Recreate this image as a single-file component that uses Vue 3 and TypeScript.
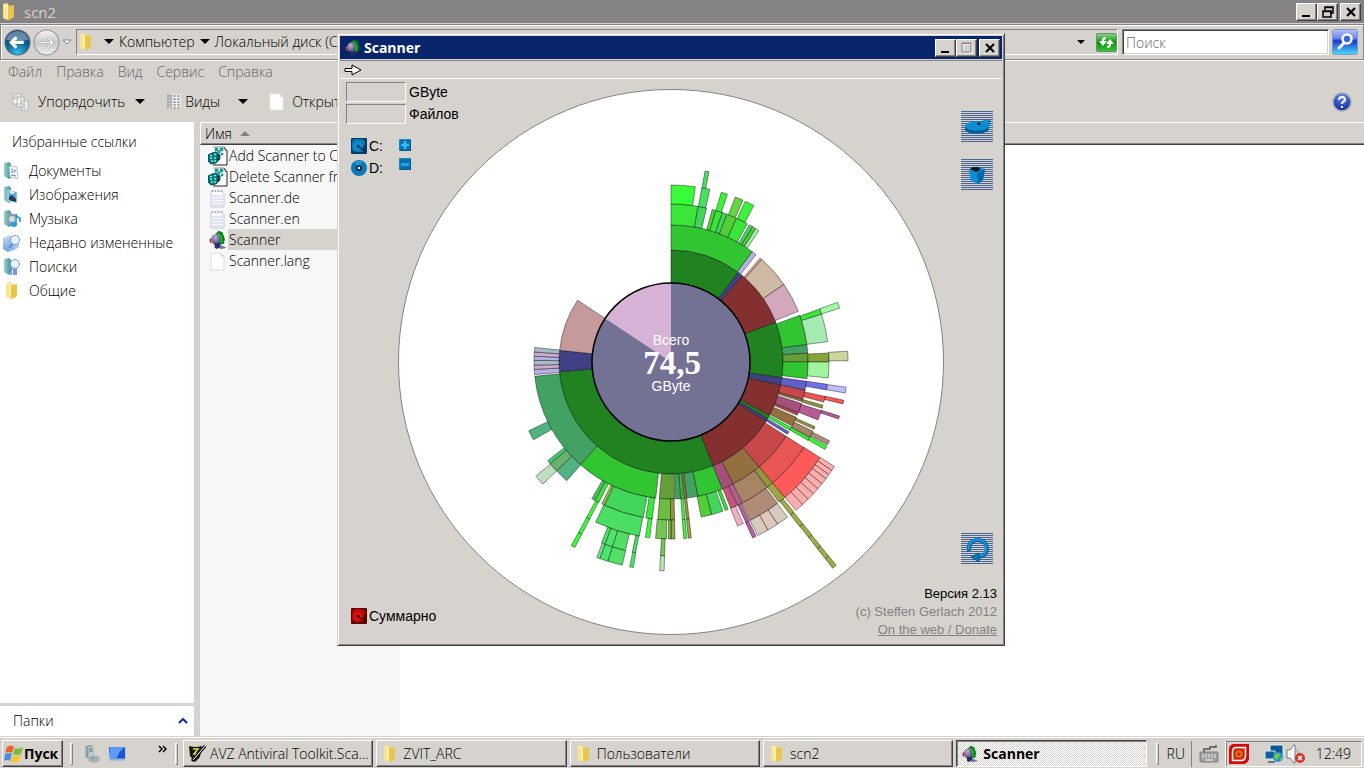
<script setup lang="ts">
import { computed, ref } from 'vue'

type Slice = [ring: number, from: number, to: number, color: string]

const radii = [79, 112, 137, 158, 177, 194, 209, 223, 237, 250, 262]

const slices: Slice[] = [
  [0, 0, 36.9, '#208220'], [0, 36.9, 39.5, '#404084'], [0, 39.5, 69.2, '#843031'],
  [0, 69.2, 98.1, '#208220'], [0, 98.1, 101.9, '#404084'], [0, 101.9, 118.6, '#843031'],
  [0, 118.6, 120.4, '#208220'], [0, 120.4, 121.9, '#404084'], [0, 121.9, 157.9, '#843031'],
  [0, 157.9, 265, '#208220'], [0, 265, 276, '#404084'], [0, 276, 303.5, '#c69a9a'],

  [1, 0, 36.4, '#31c631'], [1, 36.4, 38.4, '#b5b2e8'], [1, 40.6, 41.5, '#e8a2a2'],
  [1, 41.5, 55.5, '#ceb9a5'], [1, 55.5, 68.3, '#d4a8bc'], [1, 70.1, 82.7, '#31c631'],
  [1, 82.7, 86.3, '#42a263'], [1, 86.3, 89.9, '#639e38'], [1, 89.9, 97, '#31c631'],
  [1, 98.1, 101.9, '#6060c8'], [1, 101.9, 105.8, '#c64849'], [1, 105.8, 106.8, '#947040'],
  [1, 107.6, 111.8, '#a5507a'], [1, 111.9, 112.9, '#c64849'], [1, 113.8, 117.9, '#947040'],
  [1, 118.6, 119.9, '#30f430'], [1, 120.6, 121.8, '#6060c8'], [1, 122.8, 140, '#c64849'],
  [1, 140, 153, '#947040'], [1, 153, 158, '#a5507a'], [1, 158, 168.7, '#31c631'],
  [1, 168.7, 173.5, '#42a263'], [1, 173.5, 174.5, '#947a40'], [1, 174.7, 176, '#31c631'],
  [1, 176, 178, '#42a263'], [1, 178.4, 184.9, '#639e38'], [1, 186.4, 221.4, '#31c631'],
  [1, 221.4, 264, '#42a263'], [1, 264.7, 266.9, '#b5b2e8'], [1, 266.9, 268.7, '#ceaace'],
  [1, 268.7, 270.7, '#a8bcc8'], [1, 270.7, 272.4, '#b5b2e8'], [1, 272.4, 274.2, '#ceaace'],
  [1, 274.2, 276.1, '#a8bcc8'],

  [2, 0, 9.9, '#39e639'], [2, 9.9, 13, '#42d65a'], [2, 15.1, 16.5, '#52ce39'],
  [2, 16.5, 19, '#39e639'], [2, 19, 20.7, '#42d65a'], [2, 20.7, 24.5, '#52ce39'],
  [2, 24.5, 28.9, '#39e639'], [2, 29.7, 31.1, '#42d65a'], [2, 31.1, 32.3, '#52ce39'],
  [2, 32.5, 33.8, '#a0f4a0'], [2, 70.4, 72.4, '#39e639'], [2, 72.4, 82.6, '#a5ebb0'],
  [2, 86.7, 90, '#84a639'], [2, 90, 95.8, '#a0f4a0'], [2, 98.1, 100.2, '#7071e8'],
  [2, 102.6, 104.7, '#e85552'], [2, 105.9, 107, '#94963c'], [2, 108, 111.5, '#b85c94'],
  [2, 114.2, 115.2, '#94963c'], [2, 116, 118.4, '#a88464'], [2, 118.6, 119.8, '#30f430'],
  [2, 122.8, 140, '#e85552'], [2, 140, 142.5, '#94963c'], [2, 142.5, 153, '#a88464'],
  [2, 153.2, 155, '#b85c94'], [2, 155.2, 157.8, '#c65478'], [2, 158.8, 160, '#30e430'],
  [2, 160.8, 165.1, '#42d65a'], [2, 165.1, 169, '#52ce39'], [2, 173.4, 174.4, '#94963c'],
  [2, 174.9, 175.9, '#39fc39'], [2, 178.7, 180.2, '#94963c'], [2, 180.2, 184.8, '#6bbe42'],
  [2, 186.8, 189.2, '#39e639'], [2, 190.1, 204.8, '#42d65a'], [2, 205, 206, '#84c639'],
  [2, 207.2, 208.7, '#39e639'], [2, 208.9, 210.1, '#42c65a'], [2, 221.3, 226.5, '#52b284'],
  [2, 226.5, 229.9, '#6bb26b'], [2, 229.9, 231.3, '#42c66b'], [2, 240.5, 244.2, '#52b284'],

  [3, 0, 7.9, '#39fc39'], [3, 10, 12.7, '#4ade63'], [3, 16.5, 18.6, '#39f439'],
  [3, 21.3, 24, '#63d642'], [3, 24.8, 27.9, '#39f439'], [3, 70.3, 72.3, '#a0fca0'],
  [3, 86.5, 89.6, '#ced6a0'], [3, 98.2, 100.1, '#bdbeff'], [3, 102.5, 103.7, '#ff5558'],
  [3, 107.8, 108.8, '#b85c94'], [3, 116.4, 117.9, '#b08c78'], [3, 118.3, 119.6, '#30fc30'],
  [3, 122.7, 140, '#ff5a5a'], [3, 140, 142.4, '#a0a444'], [3, 143, 153.6, '#b08c78'],
  [3, 153.9, 155, '#b85ca4'], [3, 155.9, 157.9, '#efb0c4'], [3, 173.4, 174.4, '#94a642'],
  [3, 174.9, 175.9, '#39fc39'], [3, 178.7, 180, '#94a642'], [3, 180, 180.9, '#6bbe42'],
  [3, 181.5, 185, '#73c652'], [3, 186.9, 188.3, '#39fc39'], [3, 190.3, 205.2, '#4ade63'],
  [3, 207.4, 208.5, '#39fc39'], [3, 226.4, 229.8, '#bddfbd'],

  [4, 10.1, 11.3, '#4ade63'], [4, 122.6, 124, '#ffaead'], [4, 124, 125.5, '#ffaead'],
  [4, 125.5, 127, '#ffaead'], [4, 127, 128.9, '#ffaead'], [4, 128.9, 130.8, '#ffaead'],
  [4, 130.8, 132.8, '#ffaead'], [4, 132.8, 135, '#ffaead'], [4, 135, 137.3, '#ffaead'],
  [4, 137.3, 139.9, '#ffaead'], [4, 140.7, 142, '#9cae42'], [4, 143.1, 146.7, '#d6cabd'],
  [4, 146.7, 150, '#e0c6bd'], [4, 150, 153.5, '#d6cabd'], [4, 154, 155.1, '#b85ca4'],
  [4, 181.9, 183.1, '#73c652'], [4, 190.5, 191.5, '#4ade63'], [4, 193.6, 197.6, '#52df63'],
  [4, 197.6, 199.9, '#4ae66b'], [4, 199.9, 201, '#52df63'], [4, 207.4, 208.5, '#39fc39'],

  [5, 140.8, 142, '#9cae42'], [5, 181.9, 183.1, '#bde3b0'], [5, 190.4, 191.4, '#4ae66b'],
  [5, 193.5, 197.6, '#52df63'], [5, 197.6, 199.9, '#4ae66b'], [5, 199.9, 200.8, '#73df8c'],
  [5, 207.4, 208.5, '#39fc39'],
  [6, 140.8, 141.9, '#9cae42'], [7, 140.9, 141.9, '#9cae42'], [8, 140.9, 141.9, '#9cae42'],
  [9, 140.9, 141.9, '#9cae42'],
]

function point(r: number, deg: number): string {
  const a = (deg * Math.PI) / 180
  return `${(r * Math.sin(a)).toFixed(2)} ${(-r * Math.cos(a)).toFixed(2)}`
}

const paths = computed(() =>
  slices.map(([ring, from, to, color]) => {
    const inner = radii[ring]
    const outer = radii[ring + 1]
    const large = to - from > 180 ? 1 : 0
    return {
      color,
      d: `M${point(inner, from)}L${point(outer, from)}A${outer} ${outer} 0 ${large} 1 ${point(outer, to)}L${point(inner, to)}A${inner} ${inner} 0 ${large} 0 ${point(inner, from)}Z`,
    }
  }),
)

const freeWedge = `M0 0L${point(79, 303.5)}A79 79 0 0 1 ${point(79, 0)}Z`

const menus = ['Файл', 'Правка', 'Вид', 'Сервис', 'Справка']
const links = [
  { text: 'Документы', icon: 'i-docs' },
  { text: 'Изображения', icon: 'i-pics' },
  { text: 'Музыка', icon: 'i-music' },
  { text: 'Недавно измененные', icon: 'i-recent' },
  { text: 'Поиски', icon: 'i-search' },
  { text: 'Общие', icon: 'i-folder' },
]
const files = [
  { text: 'Add Scanner to Co', icon: 'i-reg' },
  { text: 'Delete Scanner fro', icon: 'i-reg' },
  { text: 'Scanner.de', icon: 'i-note' },
  { text: 'Scanner.en', icon: 'i-note' },
  { text: 'Scanner', icon: 'i-scan' },
  { text: 'Scanner.lang', icon: 'i-page' },
]
const tasks = [
  { text: 'AVZ Antiviral Toolkit.Sca...', icon: 'i-avz' },
  { text: 'ZVIT_ARC', icon: 'i-folder' },
  { text: 'Пользователи', icon: 'i-folder' },
  { text: 'scn2', icon: 'i-folder' },
  { text: 'Scanner', icon: 'i-scan' },
]
const selected = ref('Scanner')
const activeTask = ref('Scanner')
const query = ref('')
</script>

<template>
  <svg class="defs" aria-hidden="true">
    <defs>
      <linearGradient id="gFolder" x1="0" x2="1"><stop offset="0" stop-color="#fff3ad" /><stop offset="1" stop-color="#dfb52c" /></linearGradient>
      <linearGradient id="gTeal" x1="0" x2="1"><stop offset="0" stop-color="#9ad6c9" /><stop offset="1" stop-color="#3d8f91" /></linearGradient>
      <linearGradient id="gBlue" x1="0" x2="0" y1="0" y2="1"><stop offset="0" stop-color="#c6dcf8" /><stop offset="1" stop-color="#6d9fe0" /></linearGradient>
      <radialGradient id="gBack" cx=".5" cy=".95" r=".9"><stop offset="0" stop-color="#35c5ef" /><stop offset=".5" stop-color="#12699c" /><stop offset="1" stop-color="#0d3767" /></radialGradient>
      <linearGradient id="gFwd" x1="0" x2="0" y1="0" y2="1"><stop offset="0" stop-color="#f6f6f6" /><stop offset=".5" stop-color="#c9c9c9" /><stop offset="1" stop-color="#eee" /></linearGradient>
      <linearGradient id="gGreen" x1="0" x2="0" y1="0" y2="1"><stop offset="0" stop-color="#8cd68c" /><stop offset=".5" stop-color="#089608" /><stop offset="1" stop-color="#37c637" /></linearGradient>
      <linearGradient id="gFind" x1="0" x2="0" y1="0" y2="1"><stop offset="0" stop-color="#b8c4fa" /><stop offset=".35" stop-color="#6d84ee" /><stop offset=".45" stop-color="#1839cc" /><stop offset="1" stop-color="#4fdcff" /></linearGradient>
      <radialGradient id="gHead" cx=".45" cy=".3" r=".8"><stop offset="0" stop-color="#b9b2cc" /><stop offset=".5" stop-color="#7d739c" /><stop offset="1" stop-color="#3b3574" /></radialGradient>
      <radialGradient id="gHelp" cx=".5" cy=".2" r=".8"><stop offset="0" stop-color="#5d8cf0" /><stop offset="1" stop-color="#0d2a9c" /></radialGradient>
    </defs>
    <symbol id="i-folder" viewBox="0 0 18 18">
      <path d="M3 1l5-1v2l5 1v12l-5 2-5-2z" fill="url(#gFolder)" />
      <path d="M3 1l5 1v15l-5-2z" fill="#f8e48c" /><path d="M8 4l6-2v12l-5 3-1-1z" fill="#eac54a" /><path d="M4 2l3 1v12" fill="none" stroke="#fffbe0" />
    </symbol>
    <symbol id="i-docs" viewBox="0 0 18 18">
      <path d="M1 1l5-1 2 2v14l-2 1-5-3z" fill="url(#gTeal)" /><path d="M6 4l8 1 1 12-8-2z" fill="#f4f8fc" stroke="#9ab0c8" stroke-width=".7" />
      <path d="M8 7l2 1m1 0l2 1M8 10h4m-4 3l5 1" stroke="#5a7db8" />
    </symbol>
    <symbol id="i-pics" viewBox="0 0 18 18">
      <path d="M1 1l5-1 2 2v14l-2 1-5-3z" fill="url(#gTeal)" /><path d="M5 4l9 2v11l-9-2z" fill="#57a9df" stroke="#dce8f2" stroke-width=".8" />
      <path d="M6 11l3-2 4 4v3l-7-2z" fill="#263f59" /><path d="M7 6l4 1" stroke="#fff" stroke-width="2" />
    </symbol>
    <symbol id="i-music" viewBox="0 0 18 18">
      <path d="M1 1l5-1 2 2v14l-2 1-5-3z" fill="url(#gTeal)" /><path d="M5 3l7 1v11l-7-1z" fill="#8f9da2" /><circle cx="9" cy="9" r="3" fill="#d3dadc" />
      <path d="M13 14V4q0 3 4 4v4" fill="none" stroke="#148fdc" stroke-width="1.500" /><ellipse cx="11" cy="14.500" rx="3" ry="2.500" fill="#229be8" />
    </symbol>
    <symbol id="i-recent" viewBox="0 0 18 18">
      <path d="M0 4l6-3 5 2v12l-6 3-5-3z" fill="url(#gBlue)" /><path d="M5 6l11-4v11l-6 4-5-1z" fill="#94b9ee" opacity=".8" />
      <circle cx="12" cy="6" r="4.500" fill="#e6f3ff" stroke="#7d9cc4" /><path d="M9 10l-3 4" stroke="#6585b6" stroke-width="2" />
    </symbol>
    <symbol id="i-search" viewBox="0 0 18 18">
      <path d="M1 1l5-1 2 2v14l-2 1-5-3z" fill="url(#gTeal)" /><path d="M6 8h3v9l-3-1zm4 0h4v9h-4z" fill="#6d9ce4" />
      <circle cx="12" cy="6" r="4.500" fill="#e6f3ff" stroke="#7d9cc4" /><path d="M9 10l-3 4" stroke="#6585b6" stroke-width="2" />
    </symbol>
    <symbol id="i-reg" viewBox="0 0 20 20">
      <path d="M5 1h11l3 3v15H5z" fill="#fff" /><path d="M5 1h11l3 3" fill="none" stroke="#999" /><path d="M19 4v15H5" fill="none" stroke="#222" /><path d="M16 1l2 4" stroke="#333" />
      <path d="M0 9l4-2 4-1 4 3v4l-4 4-5 1-3-3z" fill="#087c7c" stroke="#042f2f" stroke-width=".8" />
      <path d="M2 9.500h2m2-1h2M2 12h2m2 0h2M3 15h2m1 0h2" stroke="#6df0f0" stroke-width="1.500" /><path d="M10 9v5" stroke="#042f2f" stroke-width="2" stroke-dasharray="2 1" />
      <path d="M7 2h3v3H7zM12 2h3v3h-3zM10 5h2v2h-2zM13 7h2v2h-2z" fill="#12b0b0" stroke="#087070" stroke-width=".5" />
    </symbol>
    <symbol id="i-note" viewBox="0 0 20 20">
      <path d="M3 3h11l2 2v14H3z" fill="#fbfbff" stroke="#c4c6d4" /><path d="M4 8h11M4 11h11M4 14h11M4 17h11" stroke="#c2caec" /><path d="M4 3h10" stroke="#aaa" stroke-dasharray="1 2" stroke-width="2" />
    </symbol>
    <symbol id="i-page" viewBox="0 0 20 20"><path d="M3 2h10l3 3v14H3z" fill="#fff" stroke="#dedede" /><path d="M13 2v3h3" fill="#eee" stroke="#ccc" /></symbol>
    <symbol id="i-scan" viewBox="0 0 18 18">
      <path d="M6 15l6-1 5 2-5 1z" fill="#1e1e5c" opacity=".6" />
      <path d="M7 3l3-2 3 1 1 3 1 3-1 4-4 2z" fill="#0c8c20" />
      <path d="M9 1.500l3 1 2 4 .5 4-2 3" stroke="#0a7d1b" stroke-width="1.500" stroke-dasharray="2 1" fill="none" /><path d="M9 3l3 3v5" stroke="#2fc23b" fill="none" />
      <ellipse cx="7" cy="8.500" rx="4" ry="5" fill="url(#gHead)" />
      <path d="M6 12h5v3l-3 2-2-1z" fill="#2b2a6b" /><path d="M1.500 8L3 7v5l-1.500-1z" fill="#b02d38" />
    </symbol>
    <symbol id="i-avz" viewBox="0 0 18 18">
      <path d="M1 1q6 2 13 0l-2 11-5 5-5-6z" fill="#15180a" /><path d="M5 4h5l-4 5h5" fill="none" stroke="#d9e829" stroke-width="1.500" /><path d="M17 1L4 16" stroke="#111" stroke-width="3" /><path d="M17 1L5 15" stroke="#fff" />
    </symbol>
    <symbol id="i-min" viewBox="0 0 16 14"><path d="M3 11h8" stroke="#000" stroke-width="2" /></symbol>
    <symbol id="i-close" viewBox="0 0 16 14"><path d="M4 3l8 8m0-8l-8 8" stroke="#000" stroke-width="2.200" /></symbol>
    <symbol id="i-down" viewBox="0 0 10 6"><path d="M0 0h10L5 5z" fill="currentColor" /></symbol>
  </svg>

  <div class="desktop">
    <main class="explorer">
      <header class="title">
        <svg class="ic18"><use href="#i-folder" /></svg>
        <span class="title-text">scn2</span>
        <div class="win-btns">
          <button class="wb" aria-label="Свернуть"><svg><use href="#i-min" /></svg></button>
          <button class="wb" aria-label="Восстановить"><svg viewBox="0 0 16 14"><path d="M5 5V2h8v6h-3M5 2.500h8" fill="none" stroke="#000" stroke-width="1.500" /><path d="M3 6h8v6H3zM3 6.500h8" fill="none" stroke="#000" stroke-width="1.500" /></svg></button>
          <button class="wb last" aria-label="Закрыть"><svg><use href="#i-close" /></svg></button>
        </div>
      </header>

      <nav class="nav">
        <div class="travel">
          <button class="round" aria-label="Назад"><svg viewBox="0 0 26 26"><circle cx="13" cy="13" r="12" fill="url(#gBack)" stroke="#4c6074" /><path d="M2 10a11.500 11.500 0 0 1 22 0q-11 4-22 0z" fill="#fff" opacity=".35" /><path d="M19 13H7m5-5l-5 5 5 5" fill="none" stroke="#fff" stroke-width="3" /></svg></button>
          <button class="round" aria-label="Вперед"><svg viewBox="0 0 26 26"><circle cx="13" cy="13" r="12" fill="url(#gFwd)" stroke="#949494" /><path d="M7 13h12m-5-5l5 5-5 5" fill="none" stroke="#aaa" stroke-width="3" /><path d="M7 13h12m-5-5l5 5-5 5" fill="none" stroke="#f2f2f2" stroke-width="1.500" /></svg></button>
          <button class="recent" aria-label="Последние страницы"><svg viewBox="0 0 10 6"><path d="M1 1h8L5 5z" fill="#fff" stroke="#7983a8" /></svg></button>
        </div>
        <div class="address">
          <svg class="ic18"><use href="#i-folder" /></svg>
          <svg class="tri first"><use href="#i-down" /></svg>
          <a href="#" class="crumb">Компьютер</a>
          <svg class="tri"><use href="#i-down" /></svg>
          <a href="#" class="crumb">Локальный диск (C:)</a>
          <button class="drop" aria-label="Список"><svg class="tri small"><use href="#i-down" /></svg></button>
          <button class="refresh" aria-label="Обновить"><svg viewBox="0 0 21 19"><rect x=".5" y=".5" width="20" height="18" rx="1" fill="url(#gGreen)" stroke="#6b8f6b" /><path d="M10 4q-4 0-4 3v1H3l4 5 4-5H8q0-2 2-2zM11 15q4 0 4-3v-1h3l-4-5-4 5h3q0 2-2 2z" fill="#fff" /></svg></button>
        </div>
        <input v-model="query" class="query" type="text" placeholder="Поиск" aria-label="Поиск" />
        <button class="find" aria-label="Найти"><svg viewBox="0 0 26 26"><rect x=".5" y=".5" width="25" height="25" rx="2" fill="url(#gFind)" stroke="#8795c4" /><circle cx="15" cy="10" r="4.500" fill="#3a67dc" stroke="#fff" stroke-width="2.500" /><path d="M12 14l-5 5" stroke="#fff" stroke-width="3" stroke-linecap="round" /></svg></button>
      </nav>

      <div class="menu"><button v-for="m in menus" :key="m">{{ m }}</button></div>

      <div class="tools">
        <button class="tool organize"><svg viewBox="0 0 18 18"><path d="M1 1h8v10H1zM5 4h7v10H5zM9 8h7v9H9z" fill="#f8f8f8" stroke="#aaa" stroke-width=".8" /><path d="M2 3h4v3H2zM11 10v6M13 10v6" stroke="#bbb" fill="#ddd" /></svg>Упорядочить<svg class="tri"><use href="#i-down" /></svg></button>
        <button class="tool views"><svg viewBox="0 0 18 18"><path d="M2 1h14v15H2z" fill="#eee" /><path d="M3 1v15M6 1v15" stroke="#777" /><path d="M8 3h3m1 0h3M8 6h3m1 0h3M8 9h3m1 0h3M8 12h3m1 0h3M8 15h3m1 0h3" stroke="#777" /><path d="M4 3h1m-1 3h1m-1 3h1m-1 3h1" stroke="#45a" /></svg>Виды<svg class="tri"><use href="#i-down" /></svg></button>
        <button class="tool open"><svg viewBox="0 0 18 18"><path d="M2 1h10l3 3v13H2z" fill="#fff" stroke="#e6e6e6" /><path d="M12 1v3h3" fill="#ddd" /></svg>Открыть</button>
        <button class="help" aria-label="Справка"><svg viewBox="0 0 20 20"><circle cx="10" cy="10" r="9" fill="url(#gHelp)" stroke="#aaa9b0" stroke-width="1.500" /><path d="M7 8q0-3 3-3t3 2.500q0 1.500-2 2.500-1 .6-1 2M10 14v2" fill="none" stroke="#fff" stroke-width="2" /></svg></button>
      </div>

      <div class="content">
        <aside class="side">
          <section class="fav">
            <h2>Избранные ссылки</h2>
            <a v-for="l in links" :key="l.text" href="#"><svg class="ic18"><use :href="'#' + l.icon" /></svg>{{ l.text }}</a>
          </section>
          <button class="folders">Папки<svg viewBox="0 0 10 6"><path d="M1 5l4-4 4 4" fill="none" stroke="#0a309c" stroke-width="2" /></svg></button>
        </aside>
        <section class="list">
          <button class="col">Имя<svg viewBox="0 0 10 5"><path d="M0 5l5-5 5 5z" fill="#848284" /></svg></button>
          <div class="files">
            <button v-for="f in files" :key="f.text" class="file" @click="selected = f.text">
              <svg class="ic20"><use :href="'#' + f.icon" /></svg>
              <span :class="{ sel: selected === f.text }">{{ f.text }}</span>
            </button>
          </div>
        </section>
      </div>
    </main>

    <section class="scanner" aria-label="Scanner">
      <header class="s-title">
        <svg class="ic18"><use href="#i-scan" /></svg>
        <span class="title-text">Scanner</span>
        <div class="win-btns">
          <button class="wb" aria-label="Свернуть"><svg><use href="#i-min" /></svg></button>
          <button class="wb" aria-label="Развернуть" disabled><svg viewBox="0 0 16 14"><path d="M4 3h9v9H4z" fill="none" stroke="#fff" /><path d="M3 2h9v9H3zM3 2.500h9" fill="none" stroke="#848284" /></svg></button>
          <button class="wb last" aria-label="Закрыть"><svg><use href="#i-close" /></svg></button>
        </div>
      </header>
      <div class="s-menu"><button aria-label="Вперед"><svg viewBox="0 0 19 12"><path d="M1 4.500h7V1l9 5-9 5V7.500H1z" fill="#fff" stroke="#000" /></svg></button></div>
      <div class="s-body">
        <svg class="chart" viewBox="-273 -273 546 546" role="img" aria-label="Всего 74,5 GByte">
          <circle r="272.500" fill="#fff" stroke="#848284" />
          <g class="arcs"><path v-for="(p, i) in paths" :key="i" :d="p.d" :fill="p.color" /></g>
          <circle r="79" fill="#737194" />
          <path :d="freeWedge" fill="#d6b2d6" />
          <circle r="79" fill="none" stroke="#000" stroke-width="1.500" />
          <text class="cap" y="-17">Всего</text>
          <text class="total" x="1" y="12">74,5</text>
          <text class="cap" y="29">GByte</text>
        </svg>
        <div class="left">
          <label class="stat"><input type="text" readonly />GByte</label>
          <label class="stat"><input type="text" readonly />Файлов</label>
          <div class="drives">
            <button class="drive"><svg viewBox="0 0 16 16"><rect width="16" height="16" rx="1" fill="#063c63" /><rect x="1" y="1" width="13" height="13" rx="4" fill="#0878b8" /><circle cx="7" cy="8" r="4.500" fill="#0a8fd6" /><circle cx="7" cy="8" r="1.500" fill="#053a5c" /><path d="M7 8l6 5V7" fill="none" stroke="#052c48" stroke-width="1.500" /></svg>C:</button>
            <button class="drive"><svg viewBox="0 0 16 16"><circle cx="8" cy="8" r="8" fill="#0878b8" /><path d="M8 8L3 2q5-3 9-1z" fill="#2596d4" /><circle cx="8" cy="8" r="2.800" fill="#05151f" /><circle cx="8" cy="8" r="1.300" fill="#fff" /></svg>D:</button>
          </div>
          <div class="zooms">
            <button aria-label="Увеличить"><svg viewBox="0 0 12 12"><rect width="12" height="12" fill="#0871ad" /><path d="M0 12V0h12" fill="none" stroke="#3199d0" /><path d="M12 1v11H1" fill="none" stroke="#06466f" /><path d="M6 2v8M2 6h8" stroke="#31bdff" stroke-width="2.500" /></svg></button>
            <button aria-label="Уменьшить"><svg viewBox="0 0 12 12"><rect width="12" height="12" fill="#0871ad" /><path d="M0 12V0h12" fill="none" stroke="#3199d0" /><path d="M12 1v11H1" fill="none" stroke="#06466f" /><path d="M2 6.500h8" stroke="#18a6ef" stroke-width="3" /></svg></button>
          </div>
          <button class="drive sum"><svg viewBox="0 0 16 16"><rect width="16" height="16" rx="1" fill="#5c0303" /><rect x="1" y="1" width="13" height="13" rx="4" fill="#b80808" /><circle cx="7" cy="8" r="4.500" fill="#de1010" /><circle cx="7" cy="8" r="1.500" fill="#4c0202" /><path d="M7 8l6 5V7" fill="none" stroke="#470202" stroke-width="1.500" /></svg>Суммарно</button>
        </div>
        <div class="right">
          <button class="act" aria-label="Диаграмма"><svg viewBox="0 0 32 31"><path d="M4 15v4q3 4 12 3.500 11 0 12-5V14z" fill="#055c93" /><ellipse cx="16" cy="15" rx="12" ry="4.500" fill="#0b8fd8" /><path d="M18 14l3-4 8-1v5l-3 2z" fill="#0b8fd8" stroke="#0870ac" stroke-width=".7" /><path d="M16 14l1-3 3 2-3 1z" fill="#04131e" /></svg></button>
          <button class="act" aria-label="Корзина"><svg viewBox="0 0 32 31"><path d="M8 11l3-3h7l6 2-2 11-5 4-7-3z" fill="#0b8fd8" /><path d="M16 14l1 11 5-4 2-11z" fill="#0567a3" /><path d="M9 10l3-2h6l1 3-4 2z" fill="#041520" /></svg></button>
          <button class="act reload" aria-label="Обновить"><svg viewBox="0 0 32 31"><path d="M8 18q-1-10 8-11 9 0 10 8 0 8-9 9" fill="none" stroke="#06578a" stroke-width="4" /><path d="M7.500 17q0-9 8-10.500 9 0 10 8 0 8-8 9" fill="none" stroke="#1193dc" stroke-width="2.500" /><path d="M10 24l8-4v9z" fill="#0b79b9" stroke="#06578a" /></svg></button>
          <span class="ver">Версия 2.13</span>
          <span class="copy">(c) Steffen Gerlach 2012</span>
          <a class="copy" href="#">On the web / Donate</a>
        </div>
      </div>
    </section>

    <footer class="taskbar">
      <button class="start"><svg viewBox="0 0 20 18"><path d="M3 2q4-3 7 0L8 8Q5 6 1 8z" fill="#ef6230" /><path d="M11 3q4 2 8-1l-2 7q-4 2-8 0z" fill="#7cba3c" /><path d="M1 9q4-2 7 0l-2 7q-3-2-6 0z" fill="#4e8ce0" /><path d="M9 10q4 2 8 0l-2 6q-4 3-8 1z" fill="#f8c52c" /></svg>Пуск</button>
      <i class="grip"></i>
      <div class="quick">
        <button aria-label="Диспетчер сервера"><svg viewBox="0 0 18 18"><path d="M3 1l5-1 3 1v11l-5 2-3-2z" fill="#8d9ca6" /><path d="M6 2l5-1v11l-5 2z" fill="#bec9cf" /><path d="M7 4h3M7 6h3" stroke="#566" /><path d="M6 12l6-2 5 2v4l-5 2-6-2z" fill="#a6b2b8" /><path d="M8 12h4v2H8z" fill="#78aa9a" /></svg></button>
        <button aria-label="Рабочий стол"><svg viewBox="0 0 20 16"><path d="M1 1h17v12H2z" fill="#1557d0" /><path d="M2 1h16Q12 4 9 13H2z" fill="#5c9cf2" /><path d="M1 14h17" stroke="#94b4e0" stroke-width="2" /></svg></button>
        <button class="more" aria-label="Ещё"><svg viewBox="0 0 9 8"><path d="M1 1l3 3-3 3m4-6l3 3-3 3" fill="none" stroke="#000" stroke-width="1.500" /></svg></button>
      </div>
      <i class="grip"></i>
      <div class="tasks">
        <button v-for="t in tasks" :key="t.text" class="task" :class="{ on: activeTask === t.text }" @click="activeTask = t.text"><svg class="ic18"><use :href="'#' + t.icon" /></svg><span>{{ t.text }}</span></button>
      </div>
      <i class="grip wide"></i>
      <button class="lang">RU</button>
      <button class="kbd" aria-label="Клавиатура"><svg viewBox="0 0 20 18"><path d="M5 7V4h6V2h6V0" fill="none" stroke="#555" stroke-width="1.500" /><rect x="1" y="7" width="18" height="10" rx="1" fill="#9c9c9c" stroke="#808080" /><path d="M3 10h14M3 12h14" stroke="#eee" stroke-dasharray="2 1" /><path d="M6 15h8" stroke="#fff" /></svg></button>
      <div class="tray">
        <svg class="t1" viewBox="0 0 20 20"><path d="M4 0h16v15q-1 4-5 5H0V5q0-4 4-5z" fill="#d60808" /><path d="M7 3.500h9.500V12q0 4.500-4.500 4.500H3.500V8q0-4.500 3.500-4.500z" fill="#e8300c" stroke="#fff" stroke-width="1.500" /><circle cx="10" cy="10" r="4.500" fill="#ef6518" stroke="#9c1808" /><circle cx="10" cy="10" r="1.500" fill="#9c3808" /></svg>
        <svg class="t2" viewBox="0 0 20 20"><path d="M6 1h13v11H6z" fill="#0b5a96" stroke="#e9eef2" /><path d="M1 7h10v8H1z" fill="#13609a" stroke="#dfe6ec" /><path d="M4 18h7" stroke="#6a7b88" stroke-width="2" /><circle cx="14" cy="13" r="5" fill="#268fe2" /><path d="M11 10l4-1 1 3-3 4-3-2zM16 14l3-1-2 4z" fill="#62cf3b" /></svg>
        <svg class="t3" viewBox="0 0 20 20"><path d="M1 6h3l4-5h1v18H8l-4-5H1z" fill="#fff" stroke="#6c7a86" /><path d="M11 5q3 4 0 10" fill="none" stroke="#999" /><circle cx="14" cy="14" r="5" fill="#d8342a" /><path d="M12 12l4 4m0-4l-4 4" stroke="#fff" stroke-width="1.500" /></svg>
        <time>12:49</time>
      </div>
    </footer>
  </div>
</template>

<style>
html,
body,
#app {
  height: 100%;
}
body {
  margin: 0;
  overflow: hidden;
}
</style>

<style scoped>
* {
  box-sizing: border-box;
}
.defs {
  position: absolute;
  width: 0;
  height: 0;
}
.desktop {
  position: relative;
  display: flex;
  flex-direction: column;
  height: 100vh;
  background: #d6d3ce;
  color: #000;
  font: 300 14px/20px "Open Sans", "Noto Sans", sans-serif;
  white-space: nowrap;
}
button {
  display: flex;
  align-items: center;
  padding: 0;
  border: 0;
  background: none;
  color: inherit;
  font: inherit;
  text-align: left;
}
a {
  color: inherit;
  text-decoration: none;
}
svg {
  flex: none;
}
.ic18 {
  width: 18px;
  height: 18px;
}
.ic20 {
  width: 20px;
  height: 20px;
}
.tri {
  width: 10px;
  height: 6px;
}
.explorer {
  flex: 1;
  min-height: 0;
  display: flex;
  flex-direction: column;
}
.title {
  display: flex;
  align-items: center;
  height: 23px;
  padding-right: 3px;
  background: #848284;
  color: #d6d3ce;
}
.title .title-text {
  margin-left: 6px;
  font-size: 15px;
  font-weight: 400;
}
.win-btns {
  display: flex;
  margin-left: auto;
}
.wb {
  justify-content: center;
  width: 21px;
  height: 18px;
  background: #d6d3ce;
  border: 1px solid;
  border-color: #fff #424142 #424142 #fff;
  box-shadow: inset -1px -1px #848284;
}
.wb svg {
  width: 16px;
  height: 14px;
}
.wb.last {
  margin-left: 2px;
}
.nav {
  display: flex;
  align-items: center;
  height: 36px;
  margin-top: 1px;
  padding: 0 5px 0 3px;
  border: 1px solid #848284;
  box-shadow: inset 1px 1px #fff, 0 1px #fff;
}
.travel {
  display: flex;
  align-items: center;
  width: 72px;
  gap: 2px;
}
.round svg {
  display: block;
  width: 27px;
  height: 27px;
}
.recent svg {
  width: 10px;
  height: 6px;
}
.address {
  flex: 1;
  display: flex;
  align-items: center;
  height: 26px;
  border: 1px solid;
  border-color: #848284 #fff #fff #848284;
}
.tri.first {
  margin-left: 9px;
}
.crumb {
  margin: 0 5px;
}
.drop {
  margin-left: auto;
}
.tri.small {
  width: 8px;
  height: 5px;
}
.refresh {
  margin-left: 11px;
}
.refresh svg {
  width: 21px;
  height: 19px;
}
.query {
  width: 207px;
  height: 26px;
  margin: 0 3px 0 4px;
  padding: 0 3px;
  border: 1px solid;
  border-color: #848284 #fff #fff #848284;
  border-radius: 0;
  box-shadow: inset 1px 1px #424142, inset -1px -1px #d6d3ce;
  background: #fff;
  font: inherit;
  outline: 0;
}
.query::placeholder {
  color: #666466;
  opacity: 1;
}
.find svg {
  width: 26px;
  height: 26px;
}
.menu {
  display: flex;
  gap: 14px;
  height: 24px;
  padding-left: 8px;
  color: #666466;
}
.tools {
  display: flex;
  align-items: center;
  height: 38px;
  padding: 0 12px 2px;
}
.tool {
  gap: 8px;
}
.tool svg:first-child {
  width: 18px;
  height: 18px;
}
.tool .tri {
  margin-left: 2px;
}
.views {
  gap: 2px;
  margin-left: 20px;
}
.views .tri {
  margin-left: 16px;
}
.open {
  gap: 6px;
  margin-left: 20px;
}
.help {
  margin-left: auto;
}
.help svg {
  width: 20px;
  height: 20px;
}
.content {
  flex: 1;
  min-height: 0;
  display: flex;
  gap: 6px;
}
.side {
  display: flex;
  flex-direction: column;
  gap: 3px;
  width: 194px;
}
.fav {
  flex: 1;
  padding-top: 10px;
  background: #fff;
}
.fav h2 {
  margin: 0 0 7px 12px;
  font-size: 14px;
  font-weight: inherit;
}
.fav a {
  display: flex;
  align-items: center;
  gap: 8px;
  height: 24px;
  padding-left: 3px;
}
.folders {
  justify-content: space-between;
  height: 30px;
  padding: 0 6px 0 13px;
  background: #fff;
}
.folders svg {
  width: 10px;
  height: 6px;
}
.list {
  flex: 1;
  display: flex;
  flex-direction: column;
  background: #fff;
}
.col {
  gap: 8px;
  height: 23px;
  padding-left: 4px;
  border-top: 1px solid #fff;
  border-left: 1px solid #fff;
  border-bottom: 1px solid #424142;
  background: #d6d3ce;
  box-shadow: inset 0 -1px #848284;
}
.col svg {
  width: 10px;
  height: 5px;
}
.files {
  flex: 1;
  width: 200px;
  overflow: hidden;
  background: #f7f7f7;
}
.file {
  width: 100%;
  height: 21px;
  padding-left: 8px;
}
.file span {
  flex: 1;
  padding-left: 1px;
  line-height: 21px;
}
.file .sel {
  background: #d6d3ce;
}
.scanner {
  position: absolute;
  left: 337px;
  top: 33px;
  padding: 2px;
  border: 1px solid;
  border-color: #d6d3ce #424142 #424142 #d6d3ce;
  background: #d6d3ce;
  box-shadow: inset 1px 1px #fff, inset -1px -1px #848284;
}
.s-title {
  display: flex;
  align-items: center;
  height: 23px;
  padding: 0 2px 0 4px;
  background: #08246b;
  color: #fff;
  font-weight: 700;
  font-size: 14px;
}
.s-title .title-text {
  margin-left: 2px;
}
.s-menu {
  display: flex;
  align-items: center;
  height: 19px;
  margin-top: 1px;
  padding-left: 4px;
  border-top: 1px solid #848284;
  border-bottom: 1px solid #fff;
}
.s-menu svg {
  width: 19px;
  height: 12px;
}
.s-body {
  display: grid;
  grid-template-columns: 58px auto 58px;
  color: #000;
  font: 14px/18px "Liberation Sans", Arial, sans-serif;
}
.chart {
  grid-area: 1 / 2;
  display: block;
  width: 546px;
  height: 546px;
  margin: 10px 0 8px;
}
.arcs path {
  stroke: #000;
  stroke-opacity: 0.4;
  stroke-width: 1;
}
.cap {
  fill: #fff;
  font-size: 14px;
  text-anchor: middle;
}
.total {
  fill: #fff;
  font: bold 33px "Liberation Serif", "Times New Roman", serif;
  text-anchor: middle;
}
.left {
  grid-area: 1 / 1 / 2 / 3;
  z-index: 1;
  justify-self: start;
  display: grid;
  grid-template-columns: auto 1fr;
  grid-template-rows: 20px 20px 44px 1fr;
  column-gap: 16px;
  row-gap: 2px;
  padding: 3px 0 18px 6px;
}
.stat {
  grid-column: 1 / 3;
  display: flex;
  align-items: center;
  gap: 3px;
}
.stat input {
  width: 60px;
  height: 20px;
  padding: 0 2px;
  border: 1px solid;
  border-color: #848284 #fff #fff #848284;
  border-radius: 0;
  background: #d6d3ce;
  font: inherit;
}
.drives,
.zooms {
  display: flex;
  flex-direction: column;
  align-items: flex-start;
  padding-top: 11px;
}
.drives {
  gap: 4px;
  padding-left: 5px;
}
.zooms {
  gap: 7px;
  padding-top: 13px;
}
.zooms svg {
  display: block;
  width: 12px;
  height: 12px;
}
.drive {
  gap: 2px;
}
.drive svg {
  width: 16px;
  height: 16px;
}
.sum {
  grid-column: 1 / 3;
  align-self: end;
  padding-left: 5px;
}
.right {
  grid-area: 1 / 2 / 2 / 4;
  z-index: 1;
  justify-self: end;
  display: flex;
  flex-direction: column;
  align-items: flex-end;
  padding: 32px 5px 4px 0;
  font-size: 13px;
}
.act {
  margin: 0 4px 17px 0;
  background: repeating-linear-gradient(#4a6594 0 1px, transparent 1px 2px);
}
.act svg {
  width: 32px;
  height: 31px;
}
.reload {
  margin-top: auto;
  margin-bottom: 21px;
}
.copy {
  color: #848284;
}
a.copy {
  text-decoration: underline;
}
.taskbar {
  display: flex;
  align-items: center;
  height: 31px;
  margin-top: 1px;
  padding: 1px 2px 0;
  border-top: 1px solid #fff;
}
.start,
.task {
  height: 27px;
  border: 1px solid;
  border-color: #fff #424142 #424142 #fff;
  box-shadow: inset -1px -1px #848284;
}
.start {
  width: 61px;
  padding-left: 1px;
  font-size: 14px;
  font-weight: 700;
}
.start svg {
  width: 20px;
  height: 18px;
}
.grip {
  width: 3px;
  height: 22px;
  margin: 0 5px 0 7px;
  border: 1px solid;
  border-color: #fff #848284 #848284 #fff;
}
.grip.wide {
  margin: 0 8px 0 9px;
}
.quick {
  display: flex;
  align-items: center;
  width: 90px;
  gap: 7px;
  padding-left: 4px;
}
.quick svg {
  width: 19px;
  height: 18px;
}
.quick .more {
  align-self: flex-start;
  margin: 0 1px 0 auto;
}
.quick .more svg {
  width: 9px;
  height: 8px;
}
.tasks {
  flex: 1;
  display: flex;
  gap: 3px;
  min-width: 0;
}
.task {
  flex: 1;
  min-width: 0;
  gap: 4px;
  padding: 0 1px 0 4px;
}
.task span {
  overflow: hidden;
  text-overflow: ellipsis;
}
.task.on {
  border-color: #424142 #fff #fff #424142;
  box-shadow: inset 1px 1px #848284;
  background: repeating-conic-gradient(#fff 0 25%, #d6d3ce 0 50%) 0 0 / 2px 2px;
  font-weight: 700;
}
.lang {
  height: 26px;
  padding-right: 6px;
  border-right: 1px solid #848284;
}
.kbd {
  height: 26px;
  padding: 0 6px 0 7px;
  border-right: 1px solid #fff;
}
.kbd svg {
  width: 20px;
  height: 18px;
}
.tray {
  display: flex;
  align-items: center;
  width: 136px;
  height: 26px;
  padding: 0 10px 0 2px;
  border: 1px solid;
  border-color: #848284 #fff #fff #848284;
}
.tray svg {
  width: 20px;
  height: 20px;
}
.t2 {
  margin: 0 2px 0 15px;
}
.tray time {
  margin-left: auto;
}
</style>
